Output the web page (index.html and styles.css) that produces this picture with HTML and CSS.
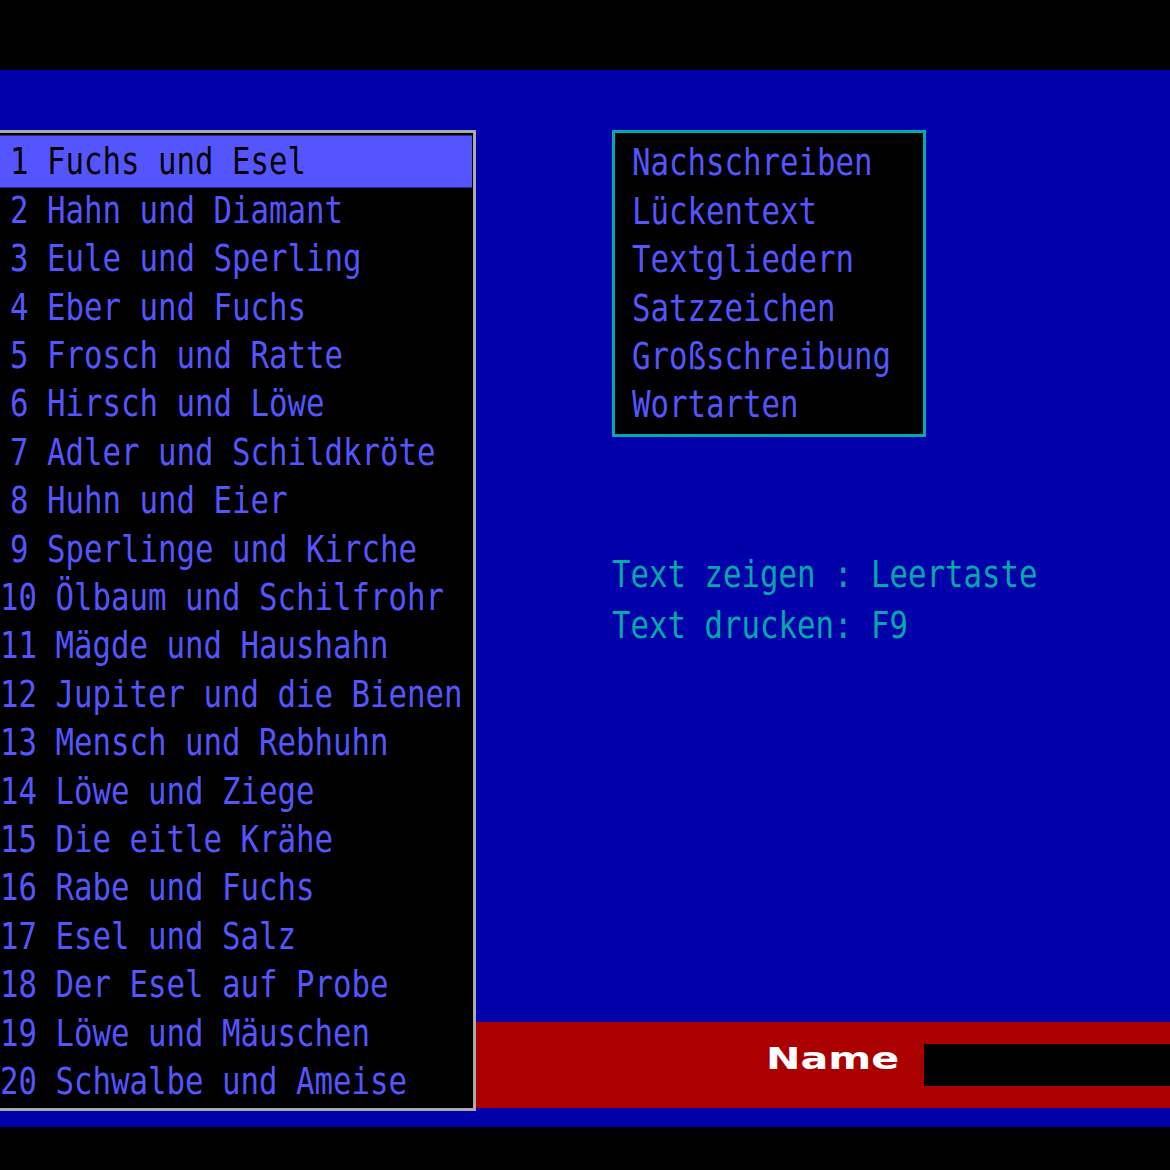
FILE: index.html
```html
<!DOCTYPE html>
<html lang="de">
<head>
<meta charset="utf-8">
<title>Fabeln</title>
<link rel="stylesheet" href="styles.css">
</head>
<body>
<div class="screen">
  <div class="topbar"></div>
  <div class="desk">
    <div class="fables">
      <div class="row sel one"><span class="t">1 Fuchs und Esel</span></div>
      <div class="row one"><span class="t">2 Hahn und Diamant</span></div>
      <div class="row one"><span class="t">3 Eule und Sperling</span></div>
      <div class="row one"><span class="t">4 Eber und Fuchs</span></div>
      <div class="row one"><span class="t">5 Frosch und Ratte</span></div>
      <div class="row one"><span class="t">6 Hirsch und Löwe</span></div>
      <div class="row one"><span class="t">7 Adler und Schildkröte</span></div>
      <div class="row one"><span class="t">8 Huhn und Eier</span></div>
      <div class="row one"><span class="t">9 Sperlinge und Kirche</span></div>
      <div class="row"><span class="t">10 Ölbaum und Schilfrohr</span></div>
      <div class="row"><span class="t">11 Mägde und Haushahn</span></div>
      <div class="row"><span class="t">12 Jupiter und die Bienen</span></div>
      <div class="row"><span class="t">13 Mensch und Rebhuhn</span></div>
      <div class="row"><span class="t">14 Löwe und Ziege</span></div>
      <div class="row"><span class="t">15 Die eitle Krähe</span></div>
      <div class="row"><span class="t">16 Rabe und Fuchs</span></div>
      <div class="row"><span class="t">17 Esel und Salz</span></div>
      <div class="row"><span class="t">18 Der Esel auf Probe</span></div>
      <div class="row"><span class="t">19 Löwe und Mäuschen</span></div>
      <div class="row"><span class="t">20 Schwalbe und Ameise</span></div>
    </div>
    <div class="side">
      <div class="modes">
        <div class="row"><span class="t">Nachschreiben</span></div>
        <div class="row"><span class="t">Lückentext</span></div>
        <div class="row"><span class="t">Textgliedern</span></div>
        <div class="row"><span class="t">Satzzeichen</span></div>
        <div class="row"><span class="t">Großschreibung</span></div>
        <div class="row"><span class="t">Wortarten</span></div>
      </div>
      <div class="keys">
        <div class="row"><span class="t">Text zeigen : Leertaste</span></div>
        <div class="row"><span class="t">Text drucken: F9</span></div>
      </div>
      <div class="namebar">
        <span class="label">Name</span>
        <div class="field"></div>
      </div>
    </div>
  </div>
</div>
</body>
</html>
```

FILE: styles.css
```css
* {
  box-sizing: border-box;
}

body {
  margin: 0;
  background: #000;
}

.screen {
  width: 1170px;
  height: 1170px;
  overflow: hidden;
  background: #000;
  font-family: "DejaVu Sans Mono", "Liberation Mono", monospace;
  font-size: 38px;
}

.topbar {
  height: 70px;
}

.desk {
  height: 1057px;
  padding-top: 60px;
  background: #0000aa;
  display: flex;
  align-items: stretch;
}

/* terminal text: a monospace face squeezed to the narrow screen cell */
.row {
  line-height: 48.4px;
  white-space: pre;
}

.t {
  display: inline-block;
  transform: scaleX(0.8086);
  transform-origin: 0 50%;
}

/* fable list */
.fables {
  align-self: flex-start;
  width: 476px;
  padding: 4.3px 1px 2.7px 0;
  background: #000;
  border: 3px solid #aaaaaa;
  border-left: 0;
  color: #5555ff;
}

.fables .one {
  padding-left: 10px;
}

.fables .sel {
  background: #5555ff;
  color: #000;
  box-shadow: 0 -1.5px 0 #5555ff, 0 1.5px 0 #5555ff;
}

.side {
  flex: 1;
  display: flex;
  flex-direction: column;
  padding-bottom: 19px;
}

/* exercise menu */
.modes {
  margin-left: 136px;
  width: 314px;
  height: 307px;
  padding: 5.3px 0 0 17px;
  background: #000;
  border: 3px solid #00aaaa;
  color: #5555ff;
}

/* key hints */
.keys {
  margin: 111.8px 0 0 136px;
  color: #00aaaa;
}

.keys .row {
  line-height: 51.5px;
}

/* name entry bar */
.namebar {
  margin-top: auto;
  height: 86px;
  background: #aa0000;
  display: flex;
  justify-content: flex-end;
  align-items: center;
}

.label {
  margin: 0 25px 14px 0;
  font-family: "DejaVu Sans", "Liberation Sans", sans-serif;
  font-weight: bold;
  font-size: 31px;
  color: #fff;
  transform: scaleX(1.33);
  transform-origin: 100% 50%;
}

.field {
  width: 246px;
  height: 42px;
  background: #000;
}
```
